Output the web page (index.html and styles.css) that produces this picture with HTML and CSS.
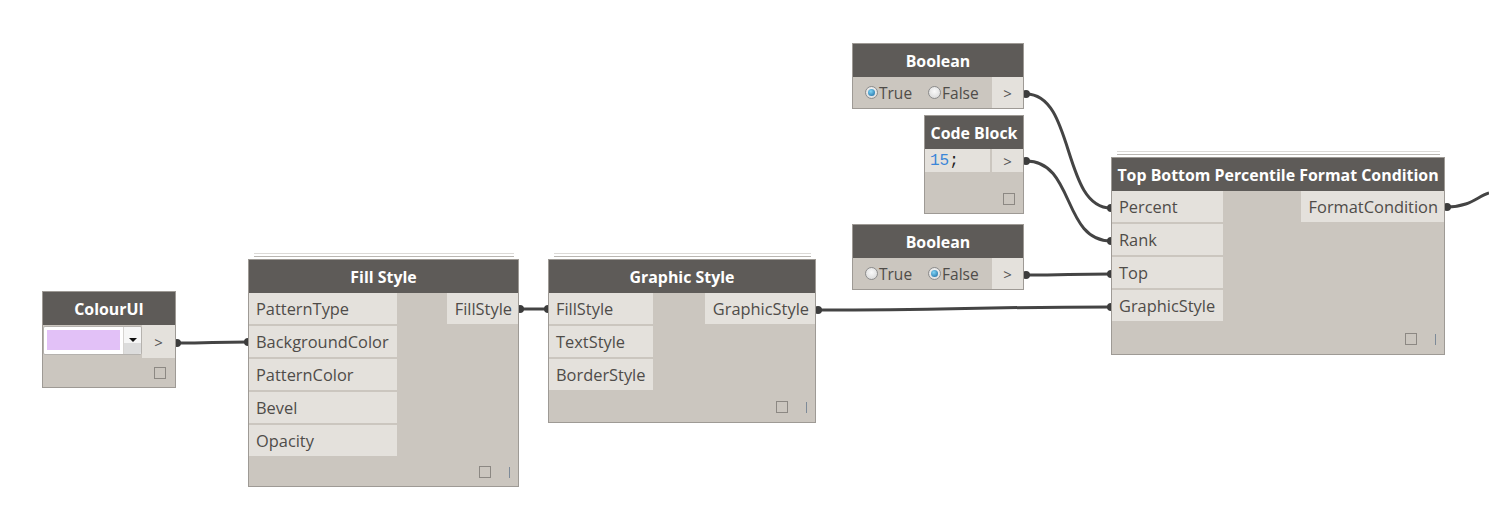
FILE: index.html
```html
<!DOCTYPE html>
<html lang="en">
<head>
    <meta charset="UTF-8">
    <title>Dynamo Graph</title>
    <link rel="stylesheet" href="styles.css">
</head>
<body>
    <div class="canvas">
        <svg class="wires" width="1489" height="520" viewBox="0 0 1489 520">
            <g fill="none" stroke="#444" stroke-width="3">
                <path d="M177 343 C212 343 213 342 248 342"/>
                <path d="M520 309 L548 309"/>
                <path d="M818 310 C960 310 970 307 1111 307"/>
                <path d="M1026 94 C1075 94 1062 208 1111 208"/>
                <path d="M1026 161 C1075 161 1062 241 1111 241"/>
                <path d="M1026 275 C1068 275 1069 274 1111 274"/>
                <path d="M1447 207 C1470 207 1478 196 1489 193"/>
            </g>
            <g fill="#3c3c3c">
                <circle cx="177" cy="343" r="4"/>
                <circle cx="248" cy="342" r="4"/>
                <circle cx="520" cy="309" r="4"/>
                <circle cx="548" cy="309" r="4"/>
                <circle cx="818" cy="310" r="4"/>
                <circle cx="1026" cy="94" r="4"/>
                <circle cx="1026" cy="161" r="4"/>
                <circle cx="1026" cy="275" r="4"/>
                <circle cx="1111" cy="208" r="4"/>
                <circle cx="1111" cy="241" r="4"/>
                <circle cx="1111" cy="274" r="4"/>
                <circle cx="1111" cy="307" r="4"/>
                <circle cx="1447" cy="207" r="4"/>
            </g>
        </svg>

        <!-- ColourUI -->
        <div class="node node-colour">
            <div class="node-head">ColourUI</div>
            <div class="node-row">
                <div class="combo">
                    <div class="combo-field"><span class="swatch"></span></div>
                    <div class="combo-btn"><span class="arrow"></span></div>
                </div>
                <div class="out-cell">&gt;</div>
            </div>
            <div class="node-foot"><span class="foot-box"></span></div>
        </div>

        <!-- Fill Style -->
        <div class="node node-fill stacked">
            <div class="node-head">Fill Style</div>
            <div class="node-ports">
                <div class="inputs">
                    <div class="port">PatternType</div>
                    <div class="port">BackgroundColor</div>
                    <div class="port">PatternColor</div>
                    <div class="port">Bevel</div>
                    <div class="port">Opacity</div>
                </div>
                <div class="outputs">
                    <div class="port">FillStyle</div>
                </div>
            </div>
            <div class="node-foot"><span class="foot-box"></span><span class="foot-bar"></span></div>
        </div>

        <!-- Graphic Style -->
        <div class="node node-graphic stacked">
            <div class="node-head">Graphic Style</div>
            <div class="node-ports">
                <div class="inputs">
                    <div class="port">FillStyle</div>
                    <div class="port">TextStyle</div>
                    <div class="port">BorderStyle</div>
                </div>
                <div class="outputs">
                    <div class="port">GraphicStyle</div>
                </div>
            </div>
            <div class="node-foot"><span class="foot-box"></span><span class="foot-bar"></span></div>
        </div>

        <!-- Boolean (true) -->
        <div class="node node-bool-a">
            <div class="node-head">Boolean</div>
            <div class="node-row bool-row">
                <div class="radios">
                    <label class="radio"><span class="dot checked"></span>True</label>
                    <label class="radio"><span class="dot"></span>False</label>
                </div>
                <div class="out-cell">&gt;</div>
            </div>
        </div>

        <!-- Code Block -->
        <div class="node node-code">
            <div class="node-head">Code Block</div>
            <div class="code-row">
                <div class="code-text"><span class="num">15</span>;</div>
                <div class="out-cell">&gt;</div>
            </div>
            <div class="node-foot code-foot"><span class="foot-box"></span></div>
        </div>

        <!-- Boolean (false) -->
        <div class="node node-bool-b">
            <div class="node-head">Boolean</div>
            <div class="node-row bool-row">
                <div class="radios">
                    <label class="radio"><span class="dot"></span>True</label>
                    <label class="radio"><span class="dot checked"></span>False</label>
                </div>
                <div class="out-cell">&gt;</div>
            </div>
        </div>

        <!-- Top Bottom Percentile Format Condition -->
        <div class="node node-tb stacked">
            <div class="node-head">Top Bottom Percentile Format Condition</div>
            <div class="node-ports">
                <div class="inputs">
                    <div class="port">Percent</div>
                    <div class="port">Rank</div>
                    <div class="port">Top</div>
                    <div class="port">GraphicStyle</div>
                </div>
                <div class="outputs">
                    <div class="port">FormatCondition</div>
                </div>
            </div>
            <div class="node-foot"><span class="foot-box"></span><span class="foot-bar"></span></div>
        </div>
    </div>
</body>
</html>
```

FILE: styles.css
```css
* {
    margin: 0;
    padding: 0;
    box-sizing: border-box;
}

:root {
    --head-bg: #5e5b58;
    --body-bg: #cbc6bf;
    --port-bg: #e4e1dc;
    --border: #9e9a95;
    --text: #4f4c49;
}

body {
    background: #fff;
    font-family: "Open Sans", "Noto Sans", sans-serif;
    overflow: hidden;
}

.canvas {
    position: relative;
    width: 1489px;
    height: 520px;
}

.wires {
    position: absolute;
    left: 0;
    top: 0;
}

/* node shell */
.node {
    position: absolute;
    background: var(--body-bg);
    border: 1px solid var(--border);
    color: var(--text);
    font-size: 16.4px;
}

.stacked::before,
.stacked::after {
    content: "";
    position: absolute;
    left: 5px;
    right: 4px;
    height: 1px;
}

.stacked::before {
    top: -7px;
    background: #dcdad7;
}

.stacked::after {
    top: -4px;
    background: #b9b6b2;
}

.node-head {
    height: 33px;
    background: var(--head-bg);
    color: #fff;
    font-weight: 700;
    font-size: 15.9px;
    display: flex;
    align-items: center;
    justify-content: center;
    white-space: nowrap;
}

.node-ports {
    display: flex;
    justify-content: space-between;
    align-items: flex-start;
}

.inputs,
.outputs {
    display: flex;
    flex-direction: column;
    gap: 2px;
}

.port {
    height: 31px;
    background: var(--port-bg);
    display: flex;
    align-items: center;
    padding: 0 8px 0 7px;
    white-space: nowrap;
}

.outputs .port {
    padding: 0 6px 0 8px;
}

.node-foot {
    height: 30px;
    display: flex;
    justify-content: flex-end;
    align-items: flex-end;
    gap: 18px;
    padding: 0 8px 8px 0;
}

.foot-box {
    width: 12px;
    height: 12px;
    border: 1.5px solid #8c8883;
}

.foot-bar {
    width: 1px;
    height: 11px;
    background: #7d8a98;
}

/* placements on the graph canvas */
.node-colour { left: 42px; top: 291px; width: 134px; }
.node-fill { left: 248px; top: 259px; width: 271px; }
.node-graphic { left: 548px; top: 259px; width: 268px; }
.node-bool-a { left: 852px; top: 43px; width: 172px; }
.node-code { left: 924px; top: 115px; width: 100px; }
.node-bool-b { left: 852px; top: 224px; width: 172px; }
.node-tb { left: 1111px; top: 157px; width: 334px; }

.node-fill .node-foot { height: 30px; }
.node-graphic .node-foot { height: 32px; padding-bottom: 9px; }
.node-tb .node-foot { height: 33px; padding-bottom: 9px; }

/* rows with a control and a single output */
.node-row {
    display: flex;
    justify-content: space-between;
    height: 33px;
}

.out-cell {
    width: 33px;
    background: var(--port-bg);
    display: flex;
    align-items: center;
    justify-content: center;
    font-size: 15px;
    color: #555;
}

/* colour picker */
.combo {
    display: flex;
    margin: 1px 0 3px 0;
    border: 1px solid #b5b2ae;
    border-radius: 2px;
    background: #fff;
    width: 100px;
}

.combo-field {
    flex: 1;
    padding: 3px;
    display: flex;
}

.swatch {
    width: 73px;
    height: 20px;
    background: #e2c1f7;
}

.combo-btn {
    width: 18px;
    border-left: 1px solid #d6d4d1;
    background: linear-gradient(#f6f6f6 0%, #f6f6f6 60%, #dcdcdc 61%, #dcdcdc 100%);
    display: flex;
    align-items: center;
    justify-content: center;
    border-radius: 0 2px 2px 0;
}

.arrow {
    width: 0;
    height: 0;
    border-left: 4px solid transparent;
    border-right: 4px solid transparent;
    border-top: 4px solid #111;
    margin-bottom: 2px;
}

/* boolean */
.bool-row {
    height: 31px;
}

.radios {
    display: flex;
    align-items: center;
    gap: 16px;
    padding-left: 12px;
    font-size: 15.5px;
}

.radio {
    display: flex;
    align-items: center;
    gap: 1px;
}

.dot {
    width: 13px;
    height: 13px;
    border-radius: 50%;
    border: 1px solid #8c8c8c;
    background: radial-gradient(circle at 50% 40%, #fafafa, #d4d4d4);
    display: inline-flex;
    align-items: center;
    justify-content: center;
}

.dot.checked::after {
    content: "";
    width: 7px;
    height: 7px;
    border-radius: 50%;
    background: radial-gradient(circle at 40% 35%, #7fd4f5, #15659e);
}

.node-bool-a .out-cell,
.node-bool-b .out-cell {
    width: 31px;
}

/* code block */
.code-row {
    display: flex;
    justify-content: space-between;
    gap: 2px;
    height: 23px;
}

.code-text {
    flex: 1;
    background: var(--port-bg);
    font-family: "Liberation Mono", "DejaVu Sans Mono", monospace;
    font-size: 16px;
    color: #222;
    padding-left: 5px;
    display: flex;
    align-items: center;
}

.code-text .num {
    color: #3a86d8;
}

.node-code .out-cell {
    width: 31px;
}

.code-foot {
    height: 41px;
    padding-right: 8px;
}

.node-colour .node-foot {
    height: 29px;
    padding-right: 9px;
}
```
